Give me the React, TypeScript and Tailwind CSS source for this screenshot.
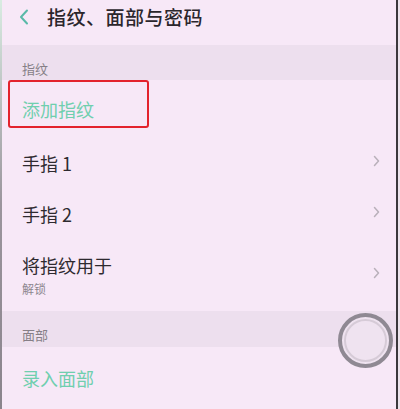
import React from 'react';

const font = { fontFamily: '"Noto Sans CJK SC", "Noto Sans", sans-serif' };

const Chevron = () => (
  <svg width="7" height="12" viewBox="0 0 7 12" className="shrink-0">
    <path d="M1.5 1.5 L5.5 6 L1.5 10.5" fill="none" stroke="#b9b0ba" strokeWidth="1.5" strokeLinecap="round" strokeLinejoin="round" />
  </svg>
);

type RowProps = { title: string; sub?: string; green?: boolean; arrow?: boolean; h: string };

const Row = ({ title, sub, green, arrow, h }: RowProps) => (
  <div className={`flex items-center pl-[20px] pr-[16px] ${h}`}>
    <div className="flex-1 flex flex-col">
      <span className={`text-[18px] leading-[24px] ${green ? 'text-[#6fcfae]' : 'text-[#2e2a2f]'}`}>{title}</span>
      {sub && <span className="text-[12px] leading-[16px] mt-[4px] text-[#8d868e]">{sub}</span>}
    </div>
    {arrow && <div className="-mt-[4px]"><Chevron /></div>}
  </div>
);

export default function App() {
  return (
    <div className="w-[400px] h-[409px] flex overflow-hidden bg-[#f7e9f7]" style={font}>
      <div className="w-[2px] bg-gradient-to-b from-[#d9ece2] via-[#9b959d] to-[#8a848c]" />
      <div className="flex-1 relative flex flex-col bg-[#f7e8f7]">
        {/* header */}
        <div className="h-[45px] flex items-center pb-[10px] pl-[17px]">
          <svg width="10" height="16" viewBox="0 0 10 16">
            <path d="M8 1.5 L2 8 L8 14.5" fill="none" stroke="#59b9a8" strokeWidth="2" strokeLinecap="round" strokeLinejoin="round" />
          </svg>
          <span className="ml-[18px] text-[19px] font-medium text-[#2b262c] tracking-[0.5px]">指纹、面部与密码</span>
        </div>

        {/* 指纹 section */}
        <div className="h-[35px] bg-[#eddfee] flex items-end pl-[20px] pb-[2px]">
          <span className="text-[13px] leading-[18px] text-[#867f87]">指纹</span>
        </div>
        <Row title="添加指纹" green h="h-[58px]" />
        <Row title="手指 1" arrow h="h-[51px]" />
        <Row title="手指 2" arrow h="h-[51px]" />
        <Row title="将指纹用于" sub="解锁" arrow h="h-[72px]" />

        {/* 面部 section */}
        <div className="h-[36px] bg-[#eddfee] flex items-end pl-[20px] pb-[3px]">
          <span className="text-[13px] leading-[18px] text-[#867f87]">面部</span>
        </div>
        <Row title="录入面部" green h="h-[62px]" />

        {/* annotation box */}
        <div className="absolute left-[6px] top-[80px] w-[141px] h-[48px] border-[2.5px] border-[#e3232d] rounded-[3px]" />

        {/* floating assistive circle */}
        <div className="absolute left-[336px] top-[313px] w-[55px] h-[55px] rounded-full border-[4px] border-[#8f8993] bg-[#efe3f0] flex items-center justify-center">
          <div className="w-[43px] h-[43px] rounded-full border-[2px] border-[#d6cbd7]" />
        </div>
      </div>
      <div className="w-[2px] bg-[#3b383c]" />
      <div className="w-[2px] bg-[#ece4ec]" />
    </div>
  );
}
